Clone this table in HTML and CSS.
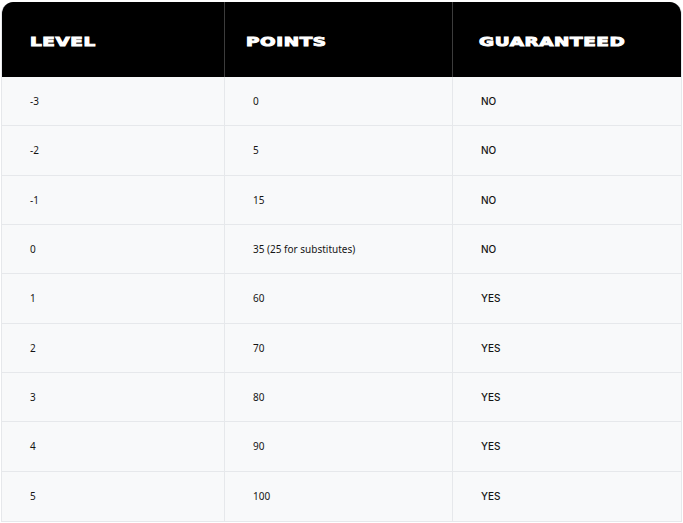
FILE: index.html
```html
<!DOCTYPE html>
<html>
<head>
<meta charset="utf-8">
<link rel="stylesheet" href="styles.css">
</head>
<body>
<div class="table">
  <div class="cell head"><span class="wide">LEVEL</span></div>
  <div class="cell head points"><span class="wide">POINTS</span></div>
  <div class="cell head last"><span class="wide">GUARANTEED</span></div>

  <div class="cell">-3</div><div class="cell">0</div><div class="cell last yn">NO</div>
  <div class="cell">-2</div><div class="cell">5</div><div class="cell last yn">NO</div>
  <div class="cell">-1</div><div class="cell">15</div><div class="cell last yn">NO</div>
  <div class="cell">0</div><div class="cell">35 (25 for substitutes)</div><div class="cell last yn">NO</div>
  <div class="cell">1</div><div class="cell">60</div><div class="cell last yn">YES</div>
  <div class="cell">2</div><div class="cell">70</div><div class="cell last yn">YES</div>
  <div class="cell">3</div><div class="cell">80</div><div class="cell last yn">YES</div>
  <div class="cell">4</div><div class="cell">90</div><div class="cell last yn">YES</div>
  <div class="cell">5</div><div class="cell">100</div><div class="cell last yn">YES</div>
</div>
</body>
</html>
```
FILE: styles.css
```css
html, body {
  margin: 0;
  padding: 0;
  background: #ffffff;
}
body {
  padding: 2px 1px;
}
.table {
  width: 681px;
  height: 520px;
  box-sizing: border-box;
  display: grid;
  grid-template-columns: 223px 228px 1fr;
  grid-template-rows: 75px repeat(9, 1fr);
  border-radius: 12px 12px 0 0;
  overflow: hidden;
  background: #f8f9fa;
  border: 1px solid #e6e8eb;
  border-top: none;
  font-family: "Noto Sans", "DejaVu Sans", sans-serif;
  font-size: 10px;
  color: #151515;
}
.cell {
  display: flex;
  align-items: center;
  padding-left: 28px;
  border-right: 1px solid #e6e8eb;
  border-bottom: 1px solid #e6e8eb;
}
.cell.last {
  border-right: none;
}
.head {
  background: #000000;
  color: #ffffff;
  font-family: "DejaVu Sans", sans-serif;
  font-weight: 900;
  font-size: 12px;
  letter-spacing: 0.4px;
  padding-top: 5px;
  border-right-color: #3c3c3c;
  border-bottom: none;
  -webkit-text-stroke: 0.9px #fff;
}
.head.points {
  padding-left: 21px;
}
.head.last {
  border-right: none;
  padding-left: 26px;
}
.wide {
  display: inline-block;
  transform: scaleX(1.53);
  transform-origin: left center;
}
.yn {
  font-family: "Inter", "Noto Sans", sans-serif;
  font-weight: 500;
}
.table > .cell:nth-last-child(-n+3) {
  border-bottom: none;
}
```
